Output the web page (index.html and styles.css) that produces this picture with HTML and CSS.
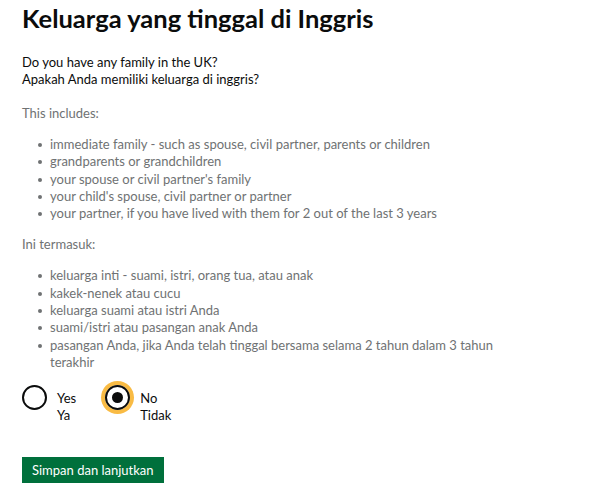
FILE: index.html
```html
<!DOCTYPE html>
<html lang="en">

<head>
    <meta charset="UTF-8">
    <meta name="viewport" content="width=device-width, initial-scale=1.0">
    <title>Keluarga yang tinggal di Inggris</title>
    <link rel="stylesheet" href="styles.css">
</head>

<body>
    <main class="page">
        <form class="question-form">
            <h1 class="page-title">Keluarga yang tinggal di Inggris</h1>

            <p class="question">Do you have any family in the UK?<br>Apakah Anda memiliki keluarga di inggris?</p>

            <div class="hint">
                <p class="hint-lead">This includes:</p>
                <ul class="hint-list">
                    <li>immediate family - such as spouse, civil partner, parents or children</li>
                    <li>grandparents or grandchildren</li>
                    <li>your spouse or civil partner's family</li>
                    <li>your child's spouse, civil partner or partner</li>
                    <li>your partner, if you have lived with them for 2 out of the last 3 years</li>
                </ul>

                <p class="hint-lead">Ini termasuk:</p>
                <ul class="hint-list">
                    <li>keluarga inti - suami, istri, orang tua, atau anak</li>
                    <li>kakek-nenek atau cucu</li>
                    <li>keluarga suami atau istri Anda</li>
                    <li>suami/istri atau pasangan anak Anda</li>
                    <li>pasangan Anda, jika Anda telah tinggal bersama selama 2 tahun dalam 3 tahun terakhir</li>
                </ul>
            </div>

            <div class="radios">
                <label class="radio">
                    <input type="radio" name="family" value="yes">
                    <span class="radio-mark"></span>
                    <span class="radio-label">Yes<br>Ya</span>
                </label>
                <label class="radio">
                    <input type="radio" name="family" value="no" checked>
                    <span class="radio-mark focused"></span>
                    <span class="radio-label">No<br>Tidak</span>
                </label>
            </div>

            <button type="submit" class="button">Simpan dan lanjutkan</button>
        </form>
    </main>
</body>

</html>
```

FILE: styles.css
```css
/* General Reset */
* {
    margin: 0;
    padding: 0;
    box-sizing: border-box;
}

body {
    font-family: Lato, "Liberation Sans", Arial, sans-serif;
    font-size: 13px;
    line-height: 17px;
    color: #0b0c0c;
    background-color: #fff;
}

.page {
    padding: 3px 22px 0;
}

.question-form {
    max-width: 480px;
}

.page-title {
    font-size: 25.5px;
    line-height: 31px;
    font-weight: 700;
    margin-bottom: 20px;
}

.question {
    margin-bottom: 17px;
}

/* Hint text */
.hint {
    color: #6f7273;
}

.hint-lead {
    margin-bottom: 14px;
}

.hint-list {
    list-style: none;
    padding-left: 28px;
    margin-bottom: 14px;
}

.hint-list li {
    position: relative;
    line-height: 17.3px;
}

.hint-list li::before {
    content: "";
    position: absolute;
    left: -12px;
    top: 7px;
    width: 4px;
    height: 4px;
    border-radius: 50%;
    background: #6f7273;
}

/* Radios */
.radios {
    display: flex;
    gap: 29px;
    margin-top: 12px;
    margin-bottom: 33px;
}

.radio {
    display: flex;
    align-items: flex-start;
    gap: 10px;
    cursor: pointer;
}

.radio input {
    display: none;
}

.radio-mark {
    width: 25px;
    height: 25px;
    border: 2px solid #0b0c0c;
    border-radius: 50%;
    display: flex;
    align-items: center;
    justify-content: center;
    flex-shrink: 0;
}

.radio input:checked + .radio-mark::after {
    content: "";
    width: 11px;
    height: 11px;
    border-radius: 50%;
    background: #0b0c0c;
}

.radio-mark.focused {
    box-shadow: 0 0 0 4px #f9bb44;
}

.radio-label {
    padding-top: 5px;
}

/* Button */
.button {
    font-family: inherit;
    font-size: 13px;
    line-height: 17px;
    color: #fff;
    background-color: #00703c;
    border: none;
    border-radius: 0;
    padding: 5px 10px 4px;
    box-shadow: 0 2px 0 #002d18;
    cursor: pointer;
}

.button:hover {
    background-color: #005a30;
}
```
